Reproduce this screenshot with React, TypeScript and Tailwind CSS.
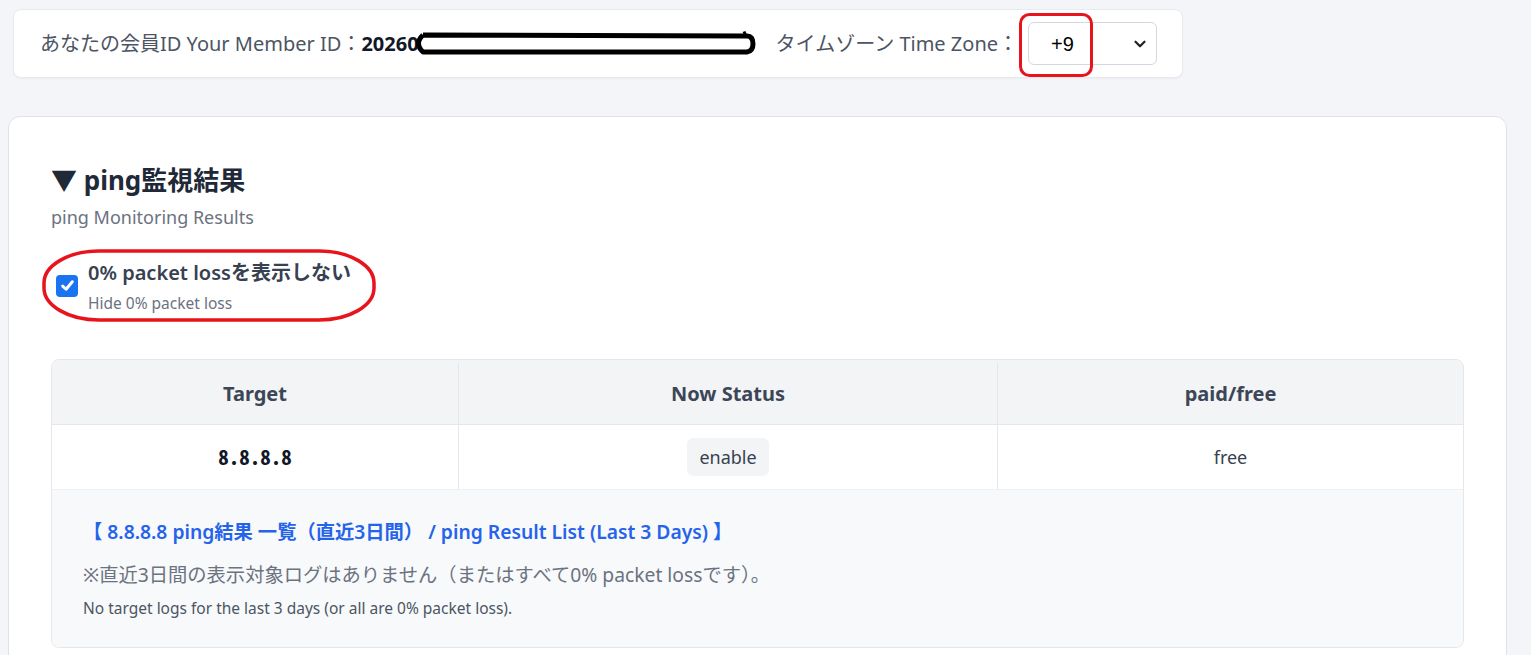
import { ChevronDown } from "lucide-react";

const font = { fontFamily: '"Noto Sans", "Noto Sans CJK JP", sans-serif' };

function Scribble() {
  return (
    <svg width="345" height="28" viewBox="0 0 345 28" className="shrink-0 -ml-[6px]">
      <path
        d="M10 5 Q1 13.5 10 22 L334 22 Q340 21 340 14 Q340 6 334 6 L10 5"
        fill="#fff"
        stroke="#000"
        strokeWidth="5"
        strokeLinejoin="round"
      />
      <path d="M331 1.5 L333 6" stroke="#000" strokeWidth="3" />
    </svg>
  );
}

function TimeZoneSelect() {
  return (
    <div className="relative">
      <div className="flex h-[43px] w-[129px] items-center justify-between rounded-md border border-[#d4d7dd] bg-white pl-[22px] pr-[7px]">
        <span className="text-[20px] text-black" style={{ fontFamily: '"Liberation Sans", Arial, sans-serif' }}>
          +9
        </span>
        <ChevronDown className="size-[18px] text-[#222]" strokeWidth={3} />
      </div>
      <svg width="74" height="64" className="pointer-events-none absolute -left-[9px] -top-[9px]">
        <rect x="1.5" y="1.5" width="71" height="61" rx="9" fill="none" stroke="#e8141c" strokeWidth="3" />
      </svg>
    </div>
  );
}

function HidePacketLoss() {
  return (
    <div className="relative mt-[31px] flex items-center gap-[10px] pl-[5px]">
      <div className="-mt-[3px] flex size-[22px] shrink-0 items-center justify-center rounded-[4px] bg-[#1a73f0]">
        <svg width="15" height="15" viewBox="0 0 14 14">
          <path d="M2.5 7.5 L5.7 10.5 L11.5 3.5" fill="none" stroke="#fff" strokeWidth="2.8" strokeLinecap="round" strokeLinejoin="round" />
        </svg>
      </div>
      <div>
        <p className="text-[20px] font-semibold leading-[24px] text-[#374151]">0% packet lossを表示しない</p>
        <p className="mt-[8px] text-[15.5px] leading-[20px] text-[#6b7280]">Hide 0% packet loss</p>
      </div>
      <svg width="334" height="73" className="pointer-events-none absolute -left-[9px] -top-[12px]">
        <rect x="2" y="2" width="330" height="69" rx="55" ry="32" fill="none" stroke="#e8141c" strokeWidth="3.5" />
      </svg>
    </div>
  );
}

function ResultTable() {
  return (
    <div className="mt-[46px] overflow-hidden rounded-lg border border-[#e5e7eb]">
      <div className="grid h-[65px] grid-cols-[407px_539px_1fr] border-b border-[#e5e7eb] bg-[#f3f4f6] pt-[3px] text-[20px] font-bold text-[#3c4656]">
        <div className="flex items-center justify-center border-r border-[#e5e7eb]">Target</div>
        <div className="flex items-center justify-center border-r border-[#e5e7eb]">Now Status</div>
        <div className="flex items-center justify-center">paid/free</div>
      </div>
      <div className="grid h-[65px] grid-cols-[407px_539px_1fr] border-b border-[#eef0f3] bg-white text-[18px] text-[#374151]">
        <div className="flex items-center justify-center border-r border-[#e5e7eb]">
          <span
            className="text-[21px] font-bold text-[#111827]"
            style={{ fontFamily: '"Noto Sans Mono CJK JP", "Noto Sans CJK JP", "DejaVu Sans Mono", monospace' }}
          >
            8.8.8.8
          </span>
        </div>
        <div className="flex items-center justify-center border-r border-[#e5e7eb]">
          <span className="rounded-md bg-[#f3f4f6] px-[12px] py-[6px] leading-[26px]">enable</span>
        </div>
        <div className="flex items-center justify-center">free</div>
      </div>
      <div className="bg-[#f8f9fb] pb-[29px] pl-[31px] pt-[29px]">
        <p className="text-[19.3px] font-semibold leading-[26px] text-[#2563eb]">
          【 8.8.8.8 ping結果 一覧（直近3日間） / ping Result List (Last 3 Days) 】
        </p>
        <p className="mt-[17px] text-[19.3px] leading-[26px] text-[#6b7280]">
          ※直近3日間の表示対象ログはありません（またはすべて0% packet lossです）。
        </p>
        <p className="mt-[10px] text-[15.5px] leading-[20px] text-[#4b5563]">
          No target logs for the last 3 days (or all are 0% packet loss).
        </p>
      </div>
    </div>
  );
}

export default function App() {
  return (
    <div className="min-h-screen bg-[#f3f5f8] px-2 pt-[9px]" style={font}>
      <div className="ml-[5px] flex h-[69px] w-[1170px] items-center rounded-lg border border-[#e8eaee] bg-white pl-[26px] shadow-[0_1px_2px_rgba(0,0,0,0.04)]">
        <span className="text-[20px] text-[#4b5563]">あなたの会員ID Your Member ID：</span>
        <span className="text-[20px] font-bold text-[#111827]">20260</span>
        <Scribble />
        <span className="ml-[18px] text-[20px] text-[#4b5563]">タイムゾーン Time Zone：</span>
        <div className="ml-[10px]">
          <TimeZoneSelect />
        </div>
      </div>

      <div className="mt-[38px] w-[1499px] rounded-xl border border-[#dfe2e7] bg-white px-[42px] pb-10 pt-[46px]">
        <h2 className="text-[26px] font-bold leading-[34px] text-[#1f2937]">▼ ping監視結果</h2>
        <p className="mt-[7px] text-[18px] leading-[26px] text-[#6b7280]">ping Monitoring Results</p>
        <HidePacketLoss />
        <ResultTable />
      </div>
    </div>
  );
}
